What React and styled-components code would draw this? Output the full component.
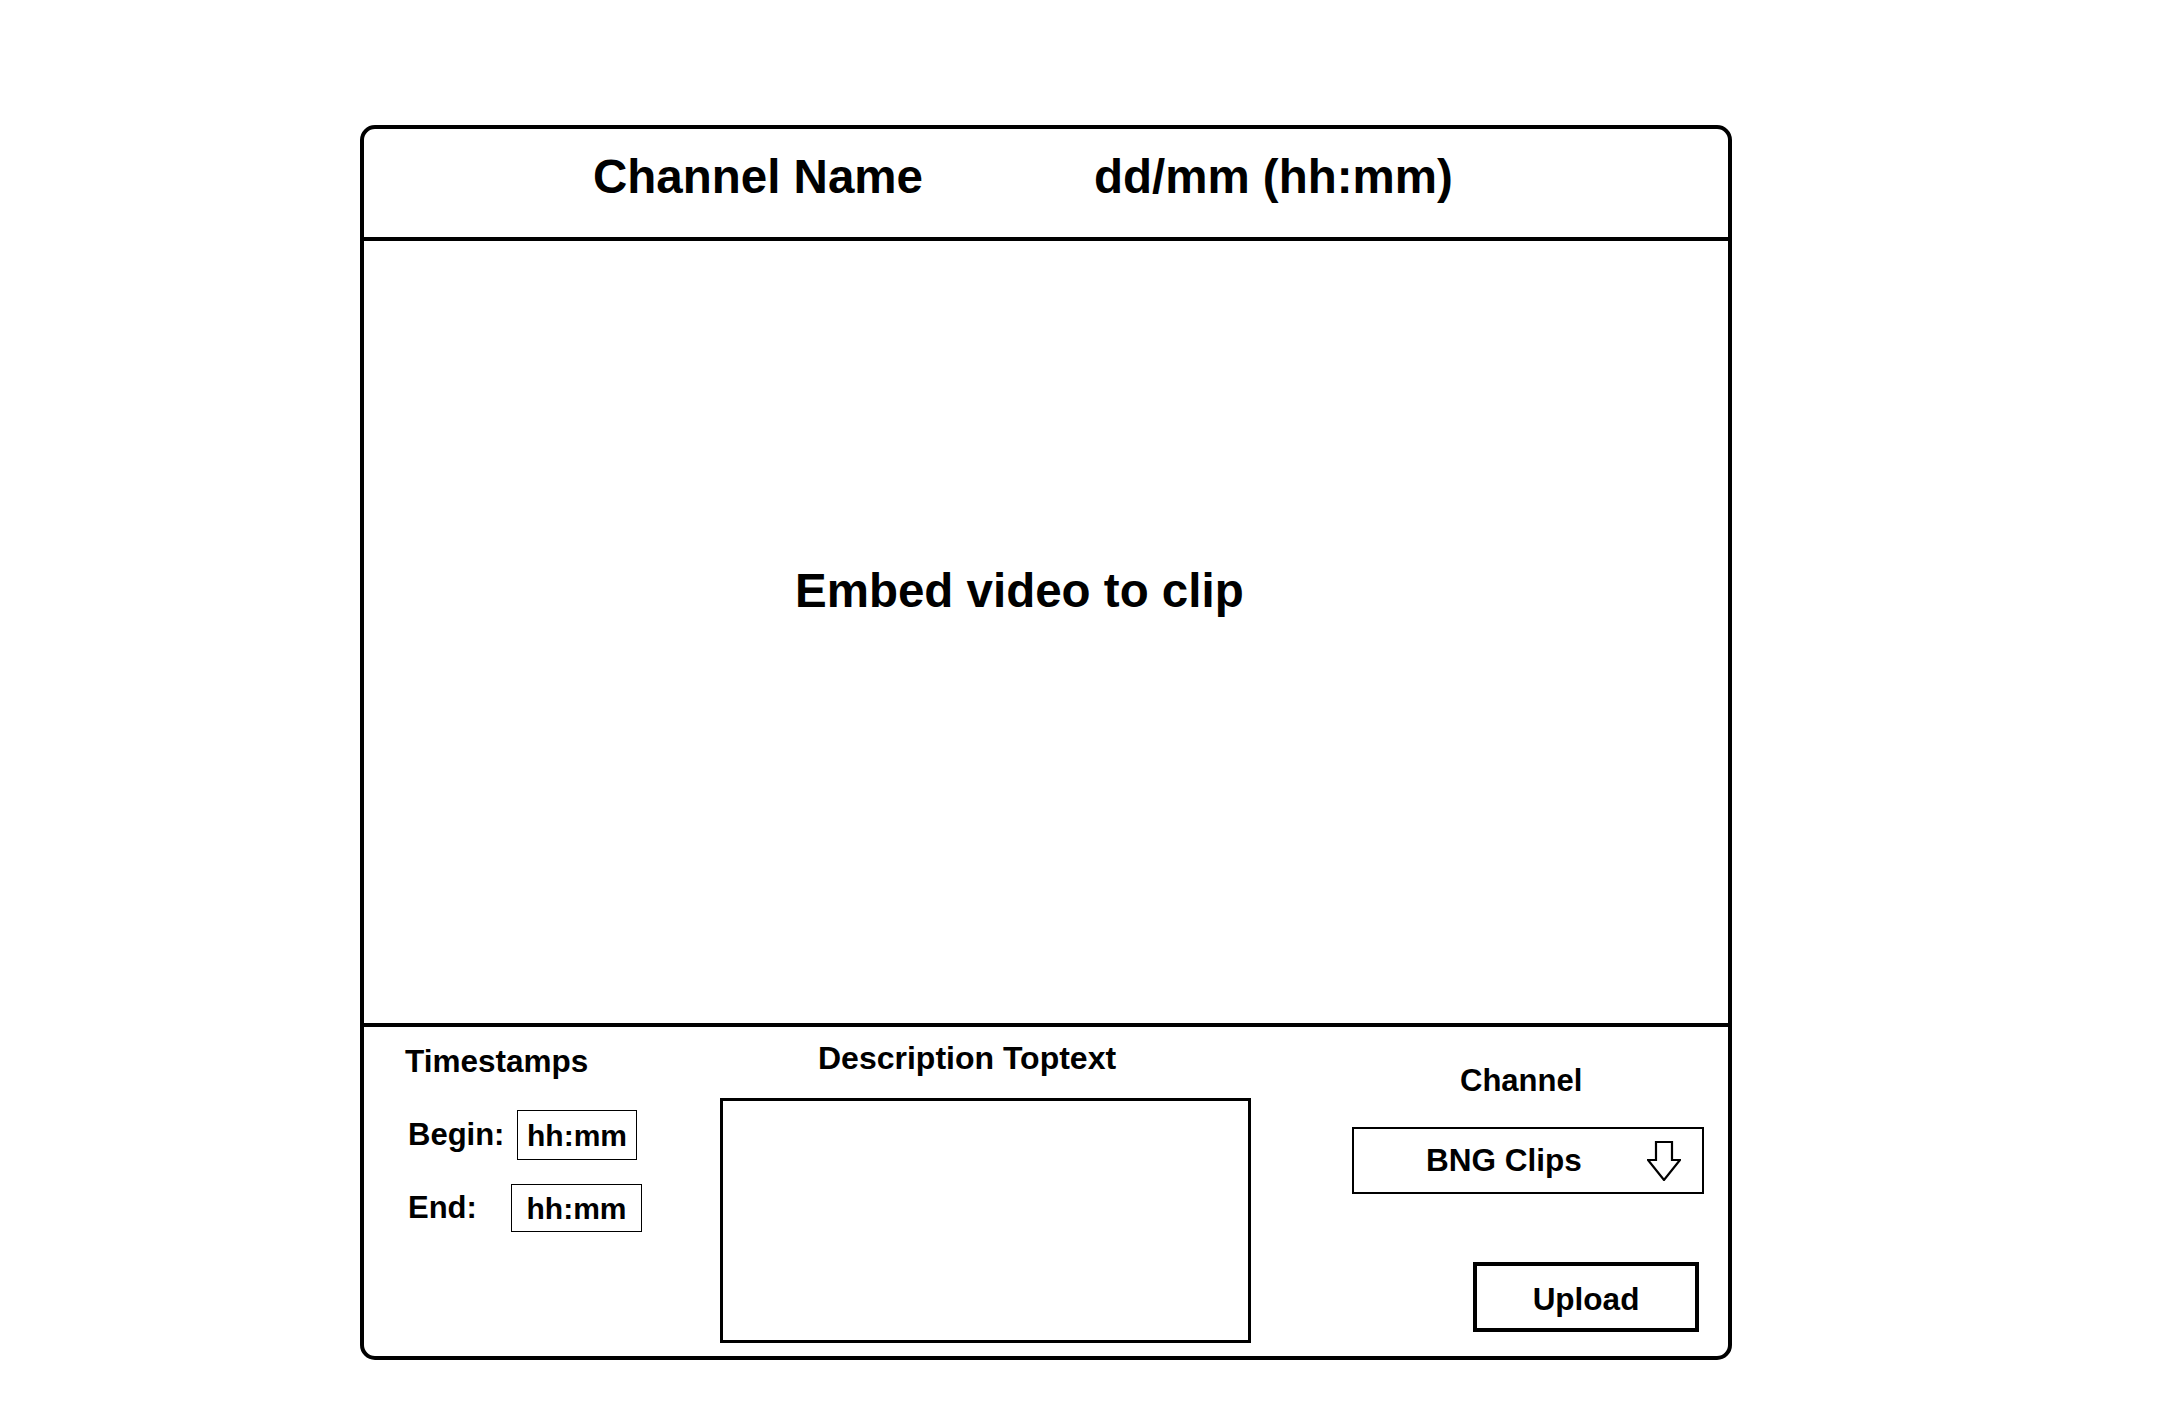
// IMPORTS
import React from 'react';
import styled, { createGlobalStyle } from 'styled-components';

// GLOBAL
const GlobalStyle = createGlobalStyle`
html, body {
  margin: 0;
  padding: 0;
  background: #fff;
}
body {
  font-family: "Liberation Sans", Arial, sans-serif;
  font-weight: bold;
  color: #000;
}
`;

// FRAME
const Frame = styled.div`
margin: 125px 0 0 360px;
width: 1372px;
height: 1235px;
box-sizing: border-box;
border: 4px solid #000;
border-radius: 15px;
display: flex;
flex-direction: column;
overflow: hidden;
`;

const Header = styled.header`
height: 112px;
box-sizing: border-box;
border-bottom: 4px solid #000;
display: flex;
align-items: flex-start;
padding: 24px 0 0 229px;
gap: 171px;
`;

const HeaderText = styled.span`
font-size: 47.5px;
line-height: 1;
white-space: nowrap;
`;

const Video = styled.section`
height: 786px;
box-sizing: border-box;
border-bottom: 4px solid #000;
padding: 326px 0 0 431px;
`;

const VideoText = styled.span`
font-size: 47.5px;
line-height: 1;
`;

// BOTTOM PANEL
const Panel = styled.section`
flex: 1;
display: flex;
padding-left: 41px;
`;

const Column = styled.div`
display: flex;
flex-direction: column;
flex-shrink: 0;
width: ${({ $width }) => $width}px;
margin-left: ${({ $left }) => $left || 0}px;
`;

const Title = styled.div`
font-size: ${({ $size }) => $size || 31}px;
line-height: 1;
white-space: nowrap;
margin-top: ${({ $top }) => $top}px;
padding-left: ${({ $indent }) => $indent || 0}px;
`;

const TimeRow = styled.div`
display: flex;
align-items: center;
margin-top: ${({ $top }) => $top}px;
padding-left: 3px;
`;

const Label = styled.span`
width: 103px;
font-size: 31px;
line-height: 1;
`;

const TimeBox = styled.div`
box-sizing: border-box;
width: ${({ $width }) => $width}px;
height: ${({ $height }) => $height}px;
margin-left: ${({ $shift }) => $shift}px;
border: 1px solid #000;
font-size: 30px;
display: flex;
align-items: center;
justify-content: center;
padding-top: 2px;
`;

const TextBox = styled.div`
box-sizing: border-box;
width: 531px;
height: 245px;
margin-top: 24px;
border: 3px solid #000;
`;

const Select = styled.div`
box-sizing: border-box;
height: 67px;
margin-top: 31px;
border: 2px solid #000;
display: flex;
align-items: center;
padding: 0 21px 0 72px;
font-size: 31.5px;
line-height: 1;
`;

const SelectArrow = styled.svg`
margin-left: auto;
width: 34px;
height: 40px;
`;

const UploadButton = styled.div`
box-sizing: border-box;
align-self: flex-end;
width: 226px;
height: 70px;
margin: 68px 5px 0 0;
border: 4px solid #000;
display: flex;
align-items: center;
justify-content: center;
padding-top: 6px;
font-size: 31.5px;
line-height: 1;
`;

// COMPONENT
const App = () => (
  <>
    <GlobalStyle />
    <Frame>
      <Header>
        <HeaderText>Channel Name</HeaderText>
        <HeaderText>dd/mm (hh:mm)</HeaderText>
      </Header>
      <Video>
        <VideoText>Embed video to clip</VideoText>
      </Video>
      <Panel>
        <Column $width={315}>
          <Title $top={19} $size={31.5}>Timestamps</Title>
          <TimeRow $top={32}>
            <Label>Begin:</Label>
            <TimeBox $width={120} $height={50} $shift={6}>hh:mm</TimeBox>
          </TimeRow>
          <TimeRow $top={24}>
            <Label>End:</Label>
            <TimeBox $width={131} $height={48} $shift={0}>hh:mm</TimeBox>
          </TimeRow>
        </Column>
        <Column $width={531}>
          <Title $top={15} $size={32} $indent={98}>Description Toptext</Title>
          <TextBox />
        </Column>
        <Column $width={352} $left={101}>
          <Title $top={38} $indent={108}>Channel</Title>
          <Select>
            BNG Clips
            <SelectArrow viewBox="0 0 34 40">
              <path d="M9 1 H25 V19 H33 L17 39 L1 19 H9 Z" fill="none" stroke="#000" strokeWidth="2.2" strokeLinejoin="miter" />
            </SelectArrow>
          </Select>
          <UploadButton>Upload</UploadButton>
        </Column>
      </Panel>
    </Frame>
  </>
);

// EXPORT
export default App;
